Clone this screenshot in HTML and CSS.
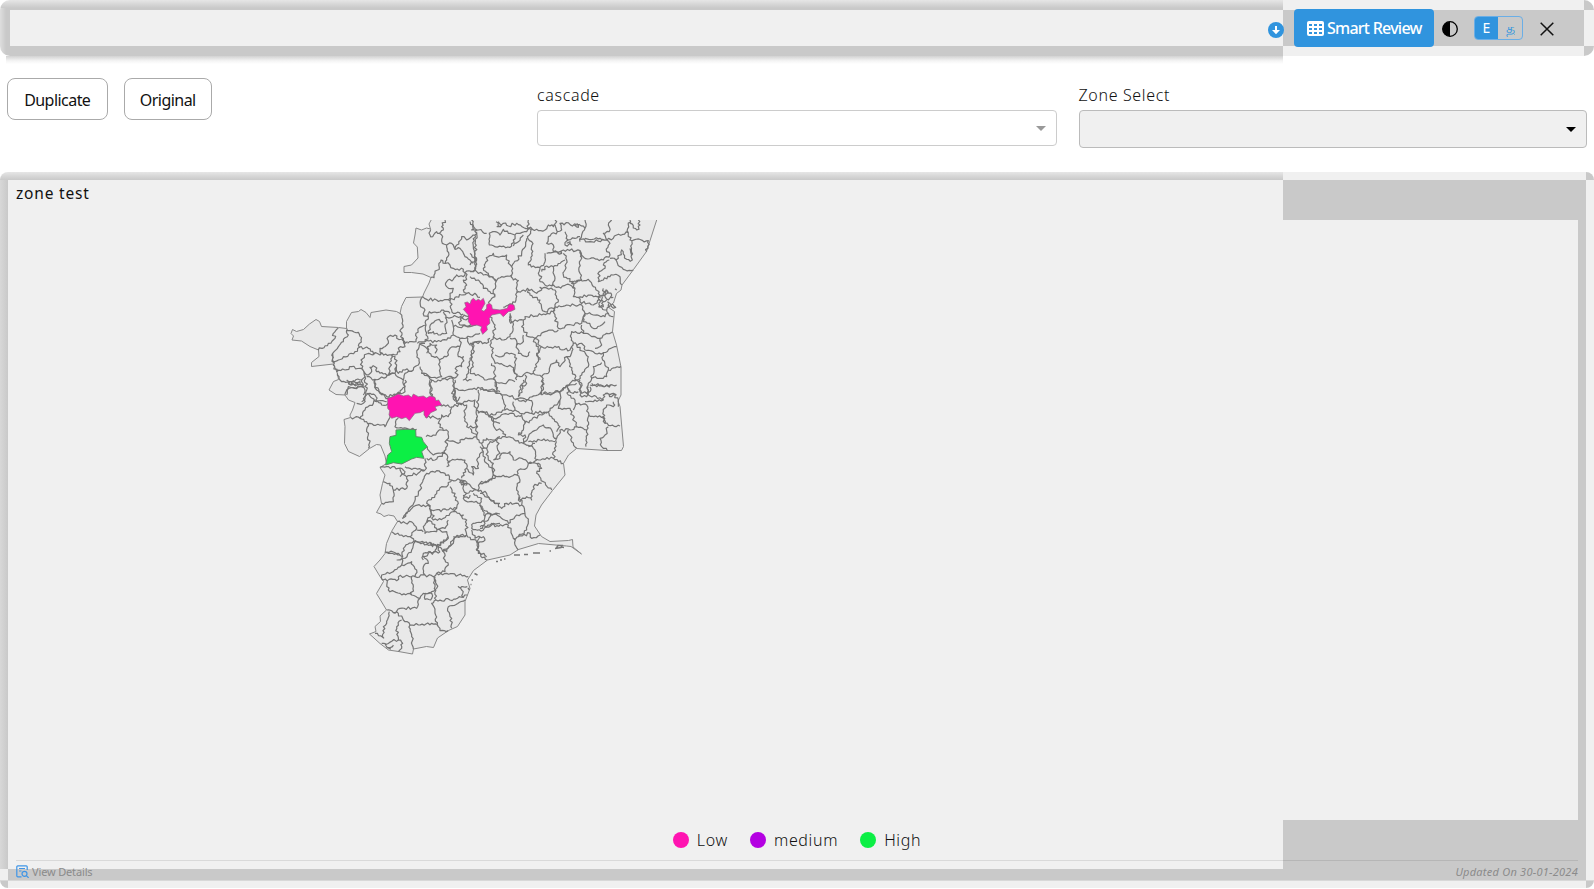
FILE: index.html
```
<!DOCTYPE html>
<html lang="en">
<head>
<meta charset="utf-8">
<title>Smart Review</title>
<link rel="stylesheet" href="styles.css">
</head>
<body>
<header class="topbar">
  <svg class="download" viewBox="0 0 16 16"><circle cx="8" cy="8" r="8" fill="#3094de"/><path d="M7 4h2v4h3l-4 4.200-4-4.200h3z" fill="#fff"/></svg>
  <button class="review">
    <svg class="grid-icon" viewBox="0 0 17 15"><rect width="17" height="15" rx="2" fill="#fff"/><path d="M2 3h3v2H2zM7 3h3v2H7zM12 3h3v2h-3zM2 7h3v2H2zM7 7h3v2H7zM12 7h3v2h-3zM2 11h3v2H2zM7 11h3v2H7zM12 11h3v2h-3z" fill="#3094de"/></svg>
    <span>Smart Review</span>
  </button>
  <svg class="contrast" viewBox="0 0 16 16"><circle cx="8" cy="8" r="7.300" fill="none" stroke="#000" stroke-width="1.300"/><path d="M8 .7a7.300 7.300 0 0 0 0 14.600z"/></svg>
  <div class="lang"><span class="lang-on">E</span><span class="lang-off">த</span></div>
  <svg class="close" viewBox="0 0 14 14"><path d="M.7.7l12.600 12.600M13.300.7L.7 13.300" stroke="#111" stroke-width="1.500" fill="none"/></svg>
</header>

<section class="controls">
  <div class="buttons">
    <button class="pill pill-dup">Duplicate</button>
    <button class="pill pill-orig">Original</button>
  </div>
  <div class="field cascade">
    <label>cascade</label>
    <div class="select"><i class="caret"></i></div>
  </div>
  <div class="field zone">
    <label>Zone Select</label>
    <div class="select"><i class="caret"></i></div>
  </div>
</section>

<main class="panel">
  <h1 class="title">zone test</h1>
  <svg class="map" viewBox="16 220 1562 600">
    <path class="land" d="M431.700 219L429 224 430.500 229 426.500 228 421.500 230 416 228 415 235 413.500 243 417.300 247 418 258 411.500 265 404 266.500V272.500L411.500 272.500 423 274 431 277.500 429 283 424 293 422.500 297 406 297.500 401.500 306.500 400 313.500 396.500 311.500 386 310 371 312.500 370 317.500 366 312.500 361 309.500 358.500 311.500 351.500 312.500 346.500 321.500V328.500L338.500 327.500 321.500 326.500 319.500 321.500 316 319.500 309.500 324 303.500 329.500 296.500 331.500 292.500 329.500 291 333.500 293.500 336 292 340 301.500 341 310 346.500 318.500 350 319 356.500 311.500 362.500V366.500L333.500 364 337.500 373.500 338.500 379.500 333.500 381.500 329 390 336 394.500 345 395 348.500 400 355 402.500 352.500 410 350 415 350.500 417.500 344 419.500 345 426.500 344.500 443.500 348.500 451.500 359.500 456.500 369.500 448.500 376.500 444.500 380.500 445 385 456 386.500 463.500 380 467.500 385 475 382.500 483.500 380 495 381.500 503.500 376.500 512.500 381 514 384 516.500 388.500 515 394 516 397.500 521.500 391.500 531.500 386.500 543.500 385 553.500 380 560 374 566.500 380 576.500 383.500 581.500 376.500 593.500 380.500 600 386.500 610 380 616 380.500 621.500 375 626.500 376 631.500 369.500 634 380 643.500 388.500 650 398.500 651.500 412.500 654 413.500 649 426.500 646.500 433.500 647.500 437.500 638 448.500 630.500 457.500 626.500 465 615V601.500L470 588.500 467.500 580 473.500 570.500 487.500 560 510 555 518.500 549.500 538.500 543.500 550 544.500 566.500 546 571 546.500 581.500 554 573 547 572.500 539.500 568.500 540.500 550 541.500 541.500 536.500 534.500 526 536 515 541.500 505 552.500 490.500 565 475 563.500 463.500 568.500 455 576.500 448.500 606.500 450.500H621.500L623.500 446.500 620 406.500 618 401 621 395V367L616.500 345 612.500 331.500 614.500 311.500 608 307 613.500 303 616.500 293.500 621 290 622 285 633.500 269.500 646.500 251.500 657 219Z"/>

    <g class="borders">
      <path transform="translate(280 210) scale(.33333)" d="M495 30L485 50 490 60 478 70 488 80 487 100 500 105 506 128 500 150 496 160 483 150 478 172 465 190 462 203 453 202M452 58L450 75 458 80 470 65 478 70M500 105L515 100 525 118 530 105 545 80 560 90 585 75 590 60 578 45 575 30M525 118L540 115 555 140 570 150 580 160M585 75L580 110 590 150 585 180 555 188 550 178 520 175 510 165 496 160M555 188L550 200 530 195 520 208 500 215 500 230 520 235 510 250 505 270M555 188L560 208 550 210 560 225 550 240 560 250 545 255 525 262 510 272M428 260L440 268 470 270 510 272 515 300 520 310 550 312M560 250L590 255 600 262M428 260L422 290 435 300 432 318 445 320 448 305 470 308 490 300 510 310M445 320L438 345 425 350 408 370 408 395 383 400M490 305L500 330 495 350 500 370 475 375 460 365 445 370 455 340 470 330 490 335M438 345L443 380 435 395 412 400M360 310L366 340 362 380 375 400 383 395M200 355L210 362 235 367 243 390 238 412 265 415 280 430 300 435 305 430M175 355L160 370 165 385 145 400 115 420M200 360L205 375 190 395 175 410 158 430 160 455 175 450 190 440 225 425 238 412M305 430L300 415 320 405 325 380 345 375 350 385 370 385 375 410 355 415 360 425 345 435 300 432M158 430L160 465 170 485 195 480 215 470 240 475 250 482 243 450 260 432 285 430M250 482L260 495 275 485 270 472 285 470 290 485 310 492 325 495 330 470 335 435 345 440 350 465 345 490 325 495M350 465L355 490 375 480 400 480 415 465 412 435 418 405 435 400M418 400L445 425 460 440 470 440 480 450M172 490L180 510 210 515 240 510 255 500 250 482M195 555L200 540 225 535 250 530 240 515 220 512 215 525M205 515L212 525 235 520M255 500L260 540 255 560 245 575M285 508L300 505 345 490 370 510 375 530 360 550 320 560 300 550 285 525 285 508 260 500M320 575L290 575 260 550M370 510L375 490 400 480M430 490L455 510 450 550 460 560M420 470L425 490 470 505 485 500 478 450 500 440 510 415 540 410 535 440 550 440 545 470 530 470 530 500 485 505M455 510L470 515 490 505 520 508 525 540 515 550 530 575 540 560M495 325L530 320 570 315 600 320M515 330L520 350 570 350 600 345M520 350L520 375 540 385 600 370M435 395L470 395 500 390 520 375M440 430L450 400 470 405 465 430M540 325L540 345 565 348 575 335 565 325 540 325M540 385L540 410M560 380L570 405 580 400 600 395M580 400L580 430 570 445 565 490 550 510 575 510"/>
      <path transform="translate(470 210) scale(.33333)" d="M0 35L10 45 5 60 25 60 50 70M20 65L15 100 18 150 15 180 25 190 40 195 70 205 78 215M0 130L15 150 0 165M0 185L15 180M57 70L58 105 95 110 125 108 130 90 135 75 115 70 100 58 90 75 75 65 57 70M78 35L85 50 100 40 115 48 140 40 175 55 175 30M85 35L95 45 80 50M135 75L150 70 170 65 178 55 182 70 172 80 185 95 185 130 175 165 190 168 210 172M130 108L145 95 160 75M170 85L155 130 125 170 115 160 110 135 80 140 70 130 55 140 48 155 40 175 55 190 78 215 95 200 125 195 130 210 145 212 140 248 138 270 115 285 100 292M125 170L125 195M78 215L70 240 75 260 55 280M0 200L25 210 40 235 60 245 75 260M175 55L200 58 225 60 235 45 250 50 260 35 255 30M255 45L262 65 275 60 270 40 320 45 345 55 335 75 330 95M262 65L235 80 230 100 250 105 250 125 275 130 280 120 330 122 332 140M285 65L295 90 285 105 305 105 300 95 290 100M295 90L315 85 330 80M310 45L325 52 320 40M345 30L345 55M330 88L360 95 410 90 420 100 410 125 420 135 400 150 330 140M345 85L390 85 410 90 400 70 418 65 415 45 425 30M410 90L430 85 440 75 475 68 480 90 535 92 530 125M475 68L475 45 480 30M480 40L500 60 510 45 505 30M485 90L487 150 470 148 455 120 445 145 438 150 420 145M480 115L485 135M438 150L450 170 460 178 490 180M418 150L400 165 405 175 388 185 385 215 400 210 430 195 450 200 455 225M330 122L332 150 330 190 335 210 310 220 280 195 290 150 280 130M225 130L225 155 210 172 205 190 215 200 210 215 225 225 245 228 255 205 250 170 230 168 215 185M230 130L260 125 275 130M250 170L275 155 285 150M245 228L260 232 300 225 315 235 305 220 325 210 355 208 370 230 388 245M140 248L160 240 185 238 200 250 215 240 210 232 225 232 255 240 265 270 255 290 225 305 215 295 210 270 180 255 175 240M315 235L310 260 325 262 355 255 388 258M325 262L330 275 370 285 390 270M255 290L290 285 335 285 345 310 335 340 305 345 265 355 255 320 255 290M345 310L370 315 405 320 415 310 430 320M345 310L340 335 380 355 395 345 405 335M120 310L122 340 130 335 160 330 165 320 215 315 250 305 255 300M160 330L155 350 175 380 195 385 225 365 265 360M60 320L75 345 70 380 95 390 120 380 128 350 120 310M195 385L215 410 260 412 300 420 310 400 340 405M305 385L305 365 340 370 335 345M305 385L310 400M340 370L365 380 390 385 395 405 375 415M390 385L428 365M340 405L345 420 375 430 400 428 440 410M400 430L398 450 415 480 453 470M415 480L410 500 365 505 370 470 395 458M310 400L300 440 290 440 305 480 320 510 335 495 355 470 355 440 320 405M215 410L200 430 210 450M235 490L240 470 250 460 260 450 270 470 290 440M235 490L215 500 220 520 210 550 235 552 280 540 300 520 320 510M160 375L155 400 140 405 135 385 120 385M140 405L145 430 170 440 180 425M195 385L190 395 205 410 205 440 200 470 190 490 165 490 150 500 140 500 130 480 125 470 75 460 65 440 70 415 60 405 70 380M75 435L95 440 105 430 130 432 140 445 135 470 140 510M0 400L20 395 50 400 60 385M10 395L5 430 10 470 0 490M65 460L75 480 75 510 50 510 35 500 0 490M190 490L215 500M75 515L100 520 125 510 135 515M80 540L75 515M165 495L170 520 150 530 145 560M320 510L335 520 330 545 350 550 355 520 365 505M365 520L400 530 440 525M295 535L310 550 325 545M388 245L390 290 410 300 420 290 412 275M400 235L405 260 415 270 425 255 410 240 400 250 390 265M425 282L437 292 425 290 420 280M385 290L400 290 395 280 410 270M420 260L430 262M435 236L440 240M405 240L412 250 395 256 400 275M410 300L415 310"/>
      <path transform="translate(320 380) scale(.33333)" d="M165 0L170 30 195 50 205 55M165 45L150 40 135 50 130 70 110 70M165 45L168 60 135 90 120 115 92 112M80 45L85 20 105 25 120 20 135 30 130 45M80 0L95 15 130 15 125 0M205 55L230 42 255 35 255 0M168 60L185 75 205 70M120 115L150 130 185 135 195 140 210 105M145 130L140 155 148 190 145 205M235 115L225 140 260 145 290 148M330 0L335 50M405 0L400 30 405 60M360 75L400 80 440 65M395 80L385 110 365 105 355 130 370 150M405 25L440 30 480 25 540 35M405 30L410 70 440 75 435 100 440 140 470 140 465 60 440 65M475 30L470 90 475 100M318 170L340 165 365 150 385 155 380 180 415 190 420 180 450 175 470 170 450 145M322 200L340 225 375 220 380 180M320 235L345 240 375 220 385 245 405 240 435 240 440 265 425 295M315 110L360 115M380 260L390 245M475 100L500 95 515 120 540 130M470 110L470 170 485 190 500 175 525 180 540 170M485 190L490 215 470 240 475 265 455 260 460 285 440 265M490 215L500 250 520 265 525 295 480 310 475 330 440 310 420 300 395 300 375 280 350 272 320 280 305 310 300 330 250 415M180 262L200 260 240 265 245 280 260 290 260 325 220 330 210 310 190 305M235 265L255 275 240 290M255 260L270 265 315 270 315 235M260 290L315 272M220 330L220 365 185 370M385 315L365 320 345 345 320 370 335 390 380 390 410 385 415 370 390 320M246 415L280 380 310 375 330 380 335 400 320 425 335 425 350 445 350 455 315 460 310 440 325 420M395 300L385 315M420 300L440 340 470 330M430 300L425 315 440 315 435 302 418 308M440 340L430 355 450 365 480 370 485 355 460 340M430 345L445 355 450 345M470 330L500 340 520 365 540 370M480 370L490 390 510 400 505 420 460 430 455 445 490 450 520 430 540 430M510 400L540 402M335 390L340 420 370 415 390 400 400 395 430 405 425 410 440 420 440 465 400 470M410 385L400 395M385 420L375 445 350 450M232 425L280 430 290 445 270 470 245 465 215 455M290 450L310 455M270 470L290 485 335 490 350 500 385 475 380 455 350 450M330 490L338 500 342 490M285 485L275 510 245 540M200 515L240 525M350 500L345 515 310 520 310 540M350 500L380 515 400 490 405 470M440 465L475 490 470 510 500 530M455 450L465 475 490 470 495 480 475 490 480 470"/>
      <path transform="translate(480 380) scale(.33333)" d="M0 30L30 34 60 40 90 50 115 55M45 0L50 38M130 0L125 30 115 50M190 0L185 40 145 58 115 55M190 40L240 35 265 15 290 10M60 40L70 60 75 90 40 105 25 105 0 95M100 65L105 90 75 90M105 60L130 61 155 62 155 82 155 100 120 100 105 90M155 100L205 95 220 80 240 60 235 35M25 105L40 120 45 145 70 155 75 170 50 180 30 185 20 205 0 200M40 115L60 110 90 100 110 110 125 105 135 130 130 150 115 165 135 165 130 190 75 170M135 130L155 120 200 95M130 190L145 170 170 150 190 135 215 150 220 170 230 175M145 185L180 180 225 185M205 95L215 110 240 140 230 155M240 60L235 85 270 85 290 140 270 150 240 150 230 175 220 235M265 15L265 45 285 60 280 90M300 0L300 45 320 50 325 20M285 68L320 75 325 110 320 150 290 140M265 150L275 185 290 205M320 150L318 200M330 15L350 20 390 15M315 65L345 60 370 60 370 45 400 40 415 60 415 80M330 20L325 45 370 60M375 40L395 50 410 45M325 105L370 110 375 130 420 138M375 130L370 95 380 75 400 80 400 65M385 140L375 165 360 175 365 200 382 212M50 180L60 220 40 240M130 190L160 205 170 240 145 250M145 200L165 190M170 238L220 235 235 245 250 250M20 205L25 240 40 250 40 280M40 240L60 235 65 220 90 215 100 240 125 235 145 250M0 310L35 300 40 285 75 290 110 285 115 270 140 265 145 250 175 250 185 265 170 280 190 305 215 330M170 250L180 262M110 285L120 300 110 330 120 365 140 350 155 360 160 320 185 310M0 340L15 350 50 370 65 385 80 370 125 375 120 350M125 375L135 400 105 410 85 430 60 410 25 400 15 410 0 375M135 400L145 430 140 450 115 470 100 475M15 410L15 430 0 440M0 445L35 430 45 440 85 435 100 475 105 495 115 510M115 470L150 460 155 475 180 465"/>
      <path transform="translate(360 510) scale(.33333)" d="M75 125L115 130 125 140M110 150L125 145 130 115 160 95M160 95L200 103 235 108 240 125M235 108L265 80M125 145L125 165 100 185 65 195 70 210 110 212 115 200 165 200 170 180 155 155 125 165M240 125L205 130 190 140 205 160 190 170 195 195 165 200M250 125L255 150 265 165 255 185 230 190 220 200 195 195M250 125L290 80 320 75M350 95L355 130 382 150M230 190L260 190 295 195 325 200M225 200L230 235 215 245 190 250 180 265 155 255 160 230 155 200M82 212L85 240 120 250 155 255M222 200L225 230 228 270 270 270 310 262 305 240 295 230 322 230M310 262L322 255M180 265L170 295 120 295 100 308 80 300M195 250L215 250 212 270 195 268 195 250M228 270L215 280 225 310 235 350 215 340 175 345 150 345 130 330 115 310 100 308M235 350L240 362 265 362M265 290L270 320 275 355M265 290L315 270M88 305L80 340 70 350 72 385M125 330L110 350 115 390 72 400 65 400M150 345L155 380 160 417M115 390L128 400 125 415 115 425M45 370L72 385M75 400L88 415 100 405M80 412L92 418"/>
    </g>
    <path class="isles" d="M496 561.500h2M500 560h2M504 559h1.500M514 555h6M524 554.500h4M533 553h7M549.500 551h1.500M555 548.500l6-1 1-2-4 0-2 3M561 547l3 .5M474.500 573.500l3 1.500M471.500 580h1.500M470.500 584.500h1M468 588l1.500 2"/>
    <g class="low">
      <path transform="translate(470 210) scale(.33333)" d="M-20 298L-12 290-16 278-8 276 0 282 4 270 10 265 18 272 25 268 32 272 40 265 45 280 34 300 42 304 50 295 50 284 58 280 65 285 67 297 90 300 112 295 115 285 123 282 132 285 135 298 123 304 115 305 100 320 90 310 65 315 58 325 60 340 50 348 52 360 38 373 32 360 35 350 20 345 5 347-5 335-5 315Z"/>
      <path transform="translate(320 380) scale(.33333)" d="M203 55L218 50 235 42 250 48 265 45 275 52 280 42 295 50 310 48 320 54 330 48 345 52 348 62 356 60 365 75 345 80 350 90 332 98 320 115 312 105 312 92 300 98 285 100 268 122 258 112 245 116 230 110 215 115 207 105 209 92 203 85Z"/>
    </g>
    <path class="high" transform="translate(320 380) scale(.33333)" d="M228 150L258 148 287 149 288 170 305 172 310 185 322 200 305 215 312 235 290 232 275 237 245 252 220 248 197 255 203 225 215 215 208 190 210 170 228 166Z"/>
  </svg>
  <div class="legend">
    <span class="key"><i class="dot dot-low"></i>Low</span>
    <span class="key"><i class="dot dot-medium"></i>medium</span>
    <span class="key"><i class="dot dot-high"></i>High</span>
  </div>
  <footer class="foot">
    <a class="details"><svg class="details-icon" viewBox="0 0 13 13" fill="none" stroke="#3f95e6" stroke-width="1.200"><path d="M5.500 11.800H1.800a1 1 0 0 1-1-1V1.800a1 1 0 0 1 1-1h8.400a1 1 0 0 1 1 1V5M3 3.500h6M3 6h2.500"/><circle cx="8.500" cy="8.800" r="2.500"/><path d="M10.300 10.600L12.600 12.800"/></svg>View Details</a>
    <em class="updated">Updated On 30-01-2024</em>
  </footer>
</main>
<script src="borders.js"></script>
</body>
</html>
```
FILE: styles.css
```
* { box-sizing: border-box; }
body {
  margin: 0;
  height: 889px;
  overflow: hidden;
  background: #fff;
  color: #111;
  font: 16px "Noto Sans", sans-serif;
}
button { font: inherit; margin: 0; }
svg { display: block; flex: none; }

.topbar {
  position: relative;
  height: 56px;
  display: flex;
  align-items: center;
  padding-left: 1268px;
  border-radius: 10px;
  background:
    linear-gradient(#f0f0f0, #f0f0f0) 10px 10px / 1273px 36px no-repeat,
    linear-gradient(#f0f0f0, #f0f0f0) 1283px 0 / 301px 10px no-repeat,
    linear-gradient(#f0f0f0, #f0f0f0) 1283px 46px / 301px 10px no-repeat,
    linear-gradient(#f0f0f0, #f0f0f0) 1584px 10px / 10px 36px no-repeat,
    linear-gradient(#e6e6e6, #c9c9c9 8px, #c9c9c900 8px) 0 0 / 1283px 10px no-repeat,
    linear-gradient(90deg, #dedede, #c9c9c9 6px) 0 0 / 10px 56px no-repeat,
    #c9c9c9;
}
.topbar::after {
  content: "";
  position: absolute;
  left: 6px;
  top: 56px;
  width: 1277px;
  height: 8px;
  background: linear-gradient(#d2d2d2, #f4f4f4 60%, #fff);
}
.download { width: 16px; height: 16px; margin-top: 4px; }
.review {
  width: 140px;
  height: 38px;
  margin-left: 10px;
  padding: 0 0 0 13px;
  display: flex;
  align-items: center;
  border: 0;
  border-radius: 4px;
  background: #3094de;
  color: #fff;
  font-weight: 500;
  letter-spacing: -.75px;
  white-space: nowrap;
}
.grid-icon { width: 17px; height: 15px; margin-right: 3px; }
.contrast { width: 16px; height: 16px; margin: 1px 0 0 8px; }
.lang {
  display: flex;
  width: 49px;
  height: 24px;
  margin-left: 16px;
  border: 1px solid #6aaee6;
  border-radius: 4px;
  overflow: hidden;
  font-size: 14px;
  line-height: 22px;
  text-align: center;
}
.lang-on { width: 23px; background: #3094de; color: #fff; }
.lang-off { flex: 1; color: #3094de; text-decoration: underline; font-size: 14px; }
.close { width: 14px; height: 14px; margin: 2px 0 0 17px; }

.controls { height: 116px; display: flex; padding: 22px 7px 0; }
.buttons { display: flex; gap: 16px; width: 530px; }
.pill {
  height: 42px;
  padding: 1px 0 0;
  border: 1px solid #aaa;
  border-radius: 8px;
  background: #fff;
  color: #111;
  letter-spacing: -.55px;
}
.pill-dup { width: 100.500px; }
.pill-orig { width: 88.500px; }
.field { padding-top: 5px; }
.field label { display: block; height: 27px; line-height: 25px; font-weight: 300; letter-spacing: .65px; }
.cascade { width: 519.500px; margin-right: 22px; }
.zone { width: 508px; }
.select {
  height: 36px;
  display: flex;
  align-items: center;
  justify-content: flex-end;
  padding-right: 10px;
  border: 1px solid #ccc;
  border-radius: 4px;
}
.caret { border: 5px solid transparent; border-top-color: #999; border-bottom: 0; }
.zone .select { height: 38px; background: #f0f0f0; border-color: #bbb; }
.zone .caret { border-top-color: #000; }

.panel {
  position: relative;
  height: 716px;
  padding: 8px 16px;
  border-radius: 8px;
  background:
    linear-gradient(#f0f0f0, #f0f0f0) 1283px 0 / 303px 8px no-repeat,
    linear-gradient(#f0f0f0, #f0f0f0) 1586px 8px / 8px 700px no-repeat,
    linear-gradient(#f0f0f0, #f0f0f0) 8px 708px / 1578px 8px no-repeat,
    linear-gradient(#f0f0f0, #f0f0f0) 0 697px / 8px 11px no-repeat,
    linear-gradient(#f0f0f0, #f0f0f0) 8px 8px / 1275px 689px no-repeat,
    linear-gradient(#f0f0f0, #f0f0f0) 1283px 48px / 295px 600px no-repeat,
    linear-gradient(#e6e6e6, #c9c9c9) 0 0 / 1283px 8px no-repeat,
    linear-gradient(90deg, #d8d8d8, #c9c9c9) 0 0 / 8px 697px no-repeat,
    #c9c9c9;
}
.panel::before {
  content: "";
  position: absolute;
  left: 0;
  top: 708px;
  width: 1594px;
  height: 1px;
  background: #d8d8d8;
}
.title { margin: 0; height: 40px; font-size: 15.500px; font-weight: 400; line-height: 26px; letter-spacing: .8px; }
.map { width: 1562px; height: 600px; overflow: hidden; }
.land { fill: #e9e9e9; stroke: #888; stroke-width: 1; stroke-linejoin: round; }
.borders path { fill: none; stroke: #747474; stroke-width: 3.600; stroke-linejoin: round; }
.isles { fill: none; stroke: #777; stroke-width: 1.500; }
.low path { fill: #ff14b1; stroke: #8a6a80; stroke-width: 2; }
.high { fill: #0cef45; stroke: #5f8a68; stroke-width: 3; }

.legend {
  height: 40px;
  display: flex;
  justify-content: center;
  align-items: center;
  gap: 22px;
  font-weight: 300;
  letter-spacing: .65px;
  line-height: 24px;
}
.key { display: flex; align-items: center; gap: 8px; }
.dot { width: 16px; height: 16px; border-radius: 50%; }
.dot-low { background: #ff14b1; }
.dot-medium { background: #b400e2; }
.dot-high { background: #0cef45; }

.foot {
  height: 20px;
  display: flex;
  justify-content: space-between;
  align-items: flex-start;
  padding-top: 4px;
  border-top: 1px solid #00000018;
  font-size: 11px;
  line-height: 14px;
  color: #8b8b8b;
}
.details { display: flex; gap: 3px; letter-spacing: -.15px; }
.details-icon { width: 13px; height: 13px; }
.updated { letter-spacing: .25px; }
```
FILE: borders.js
```
// Adds the small natural wobble of the taluk boundaries to the simplified lines.
let seed = 7;
function rnd() {
  seed = (seed * 16807) % 2147483647;
  return seed / 2147483647 - 0.5;
}
document.querySelectorAll(".borders path").forEach(function (path) {
  const lines = path.getAttribute("d").split("M").filter(Boolean);
  path.setAttribute("d", lines.map(function (line) {
    const n = line.match(/-?[\d.]+/g).map(Number);
    let out = "M" + n[0] + " " + n[1];
    for (let i = 2; i < n.length; i += 2) {
      const dx = n[i] - n[i - 2], dy = n[i + 1] - n[i - 1];
      const len = Math.hypot(dx, dy);
      const parts = Math.max(1, Math.round(len / 6));
      for (let k = 1; k < parts; k++) {
        const off = rnd() * 9 / len;
        out += "L" + (n[i - 2] + dx * k / parts - dy * off).toFixed(1) +
          " " + (n[i - 1] + dy * k / parts + dx * off).toFixed(1);
      }
      out += "L" + n[i] + " " + n[i + 1];
    }
    return out;
  }).join(""));
});
```
